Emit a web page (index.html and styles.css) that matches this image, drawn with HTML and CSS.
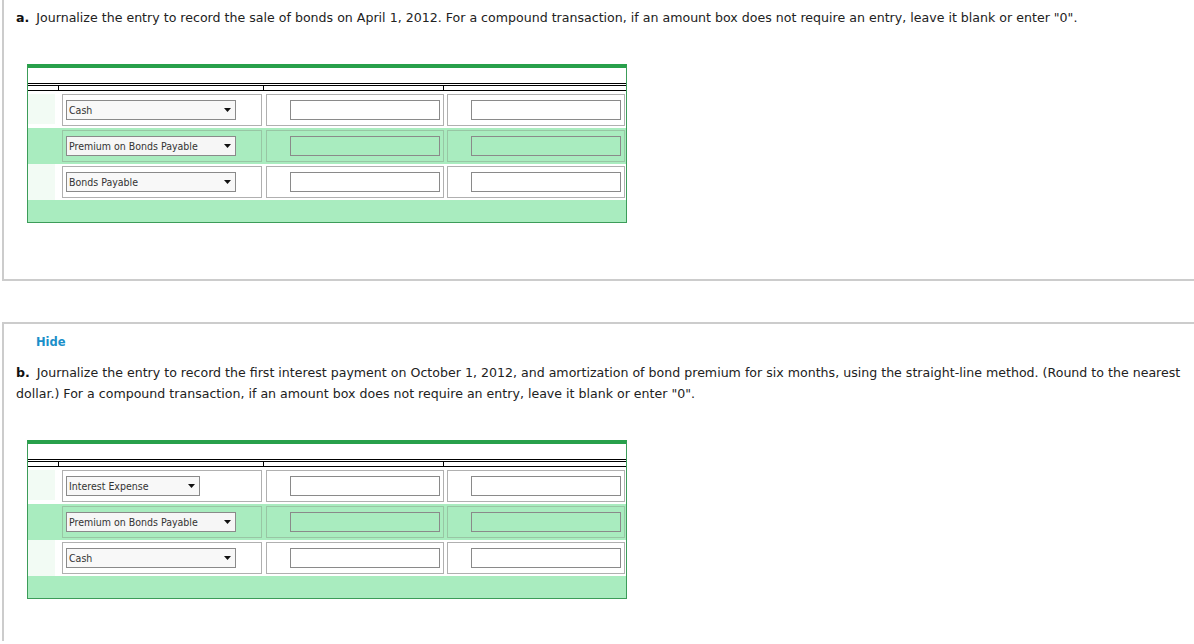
FILE: index.html
```html
<!DOCTYPE html>
<html>
<head>
<meta charset="utf-8">
<link rel="stylesheet" href="styles.css">
</head>
<body>
<div class="panel panel-a">
  <p class="prompt"><b class="lbl">a.</b> Journalize the entry to record the sale of bonds on April 1, 2012. For a compound transaction, if an amount box does not require an entry, leave it blank or enter "0".</p>
  <div class="journal">
    <div class="jtitle"></div>
    <div class="jrule"></div>
    <div class="jhead"><span class="h1"></span><span class="h2"></span><span class="h3"></span><span class="h4"></span></div>
    <div class="jrow">
      <div class="c1 light"></div>
      <div class="c2 box"><div class="sel w170"><span>Cash</span><svg class="arr" width="7" height="4" viewBox="0 0 7 4"><path d="M0 0H7L3.5 4Z" fill="#111"/></svg></div></div>
      <div class="c3 box"><input class="amt" type="text"></div>
      <div class="c4 box"><input class="amt" type="text"></div>
    </div>
    <div class="jrow green">
      <div class="c1"></div>
      <div class="c2 box"><div class="sel w170"><span>Premium on Bonds Payable</span><svg class="arr" width="7" height="4" viewBox="0 0 7 4"><path d="M0 0H7L3.5 4Z" fill="#111"/></svg></div></div>
      <div class="c3 box"><input class="amt" type="text"></div>
      <div class="c4 box"><input class="amt" type="text"></div>
    </div>
    <div class="jrow lightrow">
      <div class="c1"></div>
      <div class="c2 box"><div class="sel w170"><span>Bonds Payable</span><svg class="arr" width="7" height="4" viewBox="0 0 7 4"><path d="M0 0H7L3.5 4Z" fill="#111"/></svg></div></div>
      <div class="c3 box"><input class="amt" type="text"></div>
      <div class="c4 box"><input class="amt" type="text"></div>
    </div>
    <div class="jfoot"></div>
  </div>
</div>

<div class="panel panel-b">
  <a class="hide" href="#">Hide</a>
  <p class="prompt wrap"><b class="lbl">b.</b> Journalize the entry to record the first interest payment on October 1, 2012, and amortization of bond premium for six months, using the straight-line method. (Round to the nearest dollar.) For a compound transaction, if an amount box does not require an entry, leave it blank or enter "0".</p>
  <div class="journal">
    <div class="jtitle"></div>
    <div class="jrule"></div>
    <div class="jhead"><span class="h1"></span><span class="h2"></span><span class="h3"></span><span class="h4"></span></div>
    <div class="jrow">
      <div class="c1 light"></div>
      <div class="c2 box"><div class="sel w134"><span>Interest Expense</span><svg class="arr" width="7" height="4" viewBox="0 0 7 4"><path d="M0 0H7L3.5 4Z" fill="#111"/></svg></div></div>
      <div class="c3 box"><input class="amt" type="text"></div>
      <div class="c4 box"><input class="amt" type="text"></div>
    </div>
    <div class="jrow green">
      <div class="c1"></div>
      <div class="c2 box"><div class="sel w170"><span>Premium on Bonds Payable</span><svg class="arr" width="7" height="4" viewBox="0 0 7 4"><path d="M0 0H7L3.5 4Z" fill="#111"/></svg></div></div>
      <div class="c3 box"><input class="amt" type="text"></div>
      <div class="c4 box"><input class="amt" type="text"></div>
    </div>
    <div class="jrow lightrow">
      <div class="c1"></div>
      <div class="c2 box"><div class="sel w170"><span>Cash</span><svg class="arr" width="7" height="4" viewBox="0 0 7 4"><path d="M0 0H7L3.5 4Z" fill="#111"/></svg></div></div>
      <div class="c3 box"><input class="amt" type="text"></div>
      <div class="c4 box"><input class="amt" type="text"></div>
    </div>
    <div class="jfoot"></div>
  </div>
</div>
</body>
</html>
```
FILE: styles.css
```css
html, body {
  margin: 0;
  padding: 0;
  background: #fff;
  overflow: hidden;
}
body {
  font-family: "DejaVu Sans", Verdana, sans-serif;
  font-size: 12.6px;
  color: #222;
}
.panel {
  margin-left: 2px;
  border-left: 2px solid #cccccc;
  padding-left: 12px;
}
.panel-a {
  padding-top: 7px;
  padding-bottom: 56px;
  border-bottom: 2px solid #cccccc;
}
.panel-b {
  margin-top: 41px;
  border-top: 2px solid #cccccc;
  padding-top: 8px;
  padding-bottom: 42px;
}
.prompt {
  margin: 0;
  line-height: 21px;
}
.lbl {
  color: #111;
  margin-right: 3px;
}
.wrap {
  width: 1178px;
}
.hide {
  display: block;
  margin-left: 20px;
  line-height: 21px;
  font-size: 11.5px;
  font-weight: bold;
  color: #1b8fc9;
  text-decoration: none;
  margin-bottom: 9px;
}
.journal {
  margin-top: 36px;
  margin-left: 11px;
  width: 598px;
  border-top: 4px solid #28a04b;
  border-left: 1px solid #3c9c59;
  border-right: 1px solid #3c9c59;
  border-bottom: 1px solid #3c9c59;
}
.jtitle {
  height: 15px;
  background: #fff;
}
.jrule {
  height: 1px;
  background: #000;
  margin-bottom: 1px;
}
.jhead {
  display: flex;
  height: 4px;
  border-top: 1px solid #000;
  border-bottom: 1px solid #000;
  margin-bottom: 1px;
}
.jhead span {
  display: block;
  height: 4px;
  box-sizing: border-box;
}
.h1 { width: 31px; border-right: 1px solid #000; }
.h2 { width: 205px; border-right: 1px solid #000; }
.h3 { width: 180px; border-right: 1px solid #000; }
.h4 { width: 182px; }
.jrow {
  display: flex;
  height: 36px;
  align-items: flex-start;
  background: #fff;
}
.jrow.green {
  background: #a9ecbf;
}
.jrow .c1 {
  width: 27px;
  height: 30px;
  margin: 2px 4px 0 0;
}
.jrow .c1.light {
  background: #f2fbf4;
}
.jrow.lightrow .c1 {
  background: #f2fbf4;
  height: 36px;
  margin-top: 0;
}
.box {
  box-sizing: border-box;
  height: 32px;
  margin-top: 2px;
  border: 1px solid #b0b0b0;
  display: flex;
  align-items: center;
}
.green .box {
  border-color: #98c6a4;
}
.c2 {
  width: 200px;
  margin-left: 3px;
  margin-right: 4px;
  padding-left: 3px;
}
.c3 {
  width: 178px;
  margin-right: 3px;
  justify-content: flex-end;
  padding-right: 3px;
}
.c4 {
  width: 178px;
  justify-content: flex-end;
  padding-right: 3px;
}
.sel {
  box-sizing: border-box;
  height: 20px;
  border: 1px solid #8a8a8a;
  background: #f8f8f8;
  display: flex;
  align-items: center;
  justify-content: space-between;
  padding: 0 4px 0 2px;
  font-family: "DejaVu Sans Condensed", "DejaVu Sans", sans-serif;
  font-size: 10.5px;
  color: #333;
}
.green .sel {
  background: #f6f6f6;
}
.w170 { width: 170px; }
.w134 { width: 134px; }
.arr {
  display: block;
}
.amt {
  box-sizing: border-box;
  width: 150px;
  height: 20px;
  margin: 0;
  padding: 0;
  border: 1px solid #8a8a8a;
  background: #fff;
  outline: none;
}
.green .amt {
  background: transparent;
}
.jfoot {
  height: 22px;
  background: #a9ecbf;
}
```
